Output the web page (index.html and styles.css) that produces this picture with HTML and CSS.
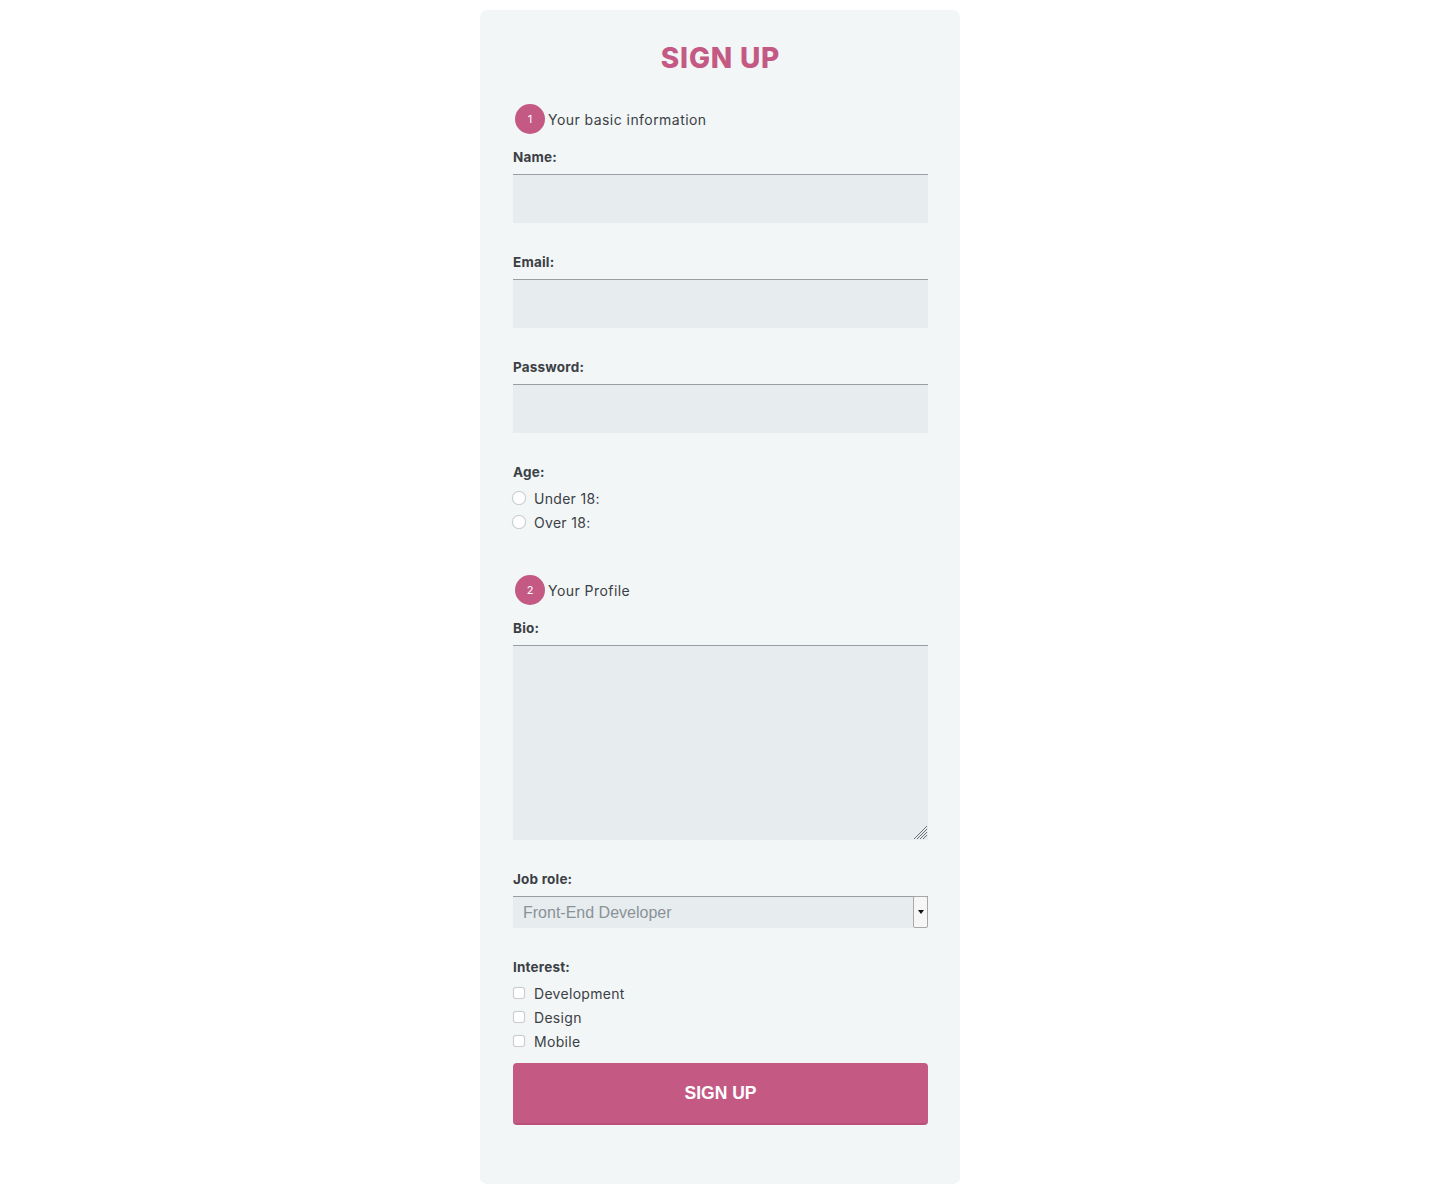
FILE: index.html
```html
<!DOCTYPE html>
<html lang="en">
<head>
<meta charset="utf-8">
<title>Sign Up</title>
<link rel="stylesheet" href="styles.css">
</head>
<body>
<form class="card">
  <h1 class="title">SIGN UP</h1>

  <div class="step"><span class="badge">1</span><span class="step-text">Your basic information</span></div>

  <div class="field">
    <label class="label" for="name">Name:</label>
    <input class="input" id="name" type="text">
  </div>
  <div class="field">
    <label class="label" for="email">Email:</label>
    <input class="input" id="email" type="email">
  </div>
  <div class="field">
    <label class="label" for="password">Password:</label>
    <input class="input" id="password" type="password">
  </div>
  <div class="field field-age">
    <span class="label label-tight">Age:</span>
    <label class="option"><span class="radio"></span>Under 18:</label>
    <label class="option"><span class="radio"></span>Over 18:</label>
  </div>

  <div class="step"><span class="badge">2</span><span class="step-text">Your Profile</span></div>

  <div class="field">
    <label class="label" for="bio">Bio:</label>
    <div class="textarea-wrap">
      <textarea class="textarea" id="bio"></textarea>
      <svg class="grip" width="14" height="14" viewBox="0 0 14 14" aria-hidden="true">
        <g stroke="#6b6f73" stroke-width="1">
          <line x1="1" y1="14" x2="14" y2="1"/>
          <line x1="4" y1="14" x2="14" y2="4"/>
          <line x1="7" y1="14" x2="14" y2="7"/>
          <line x1="10" y1="14" x2="14" y2="10"/>
        </g>
      </svg>
    </div>
  </div>
  <div class="field">
    <label class="label" for="job">Job role:</label>
    <div class="select-wrap">
      <select class="select" id="job">
        <option>Front-End Developer</option>
      </select>
      <span class="select-arrow"><span class="tri"></span></span>
    </div>
  </div>
  <div class="field field-interest">
    <span class="label label-tight">Interest:</span>
    <label class="option"><span class="check"></span>Development</label>
    <label class="option"><span class="check"></span>Design</label>
    <label class="option"><span class="check"></span>Mobile</label>
  </div>

  <button class="submit" type="button">SIGN UP</button>
</form>
</body>
</html>
```

FILE: styles.css
```css
html, body {
  margin: 0;
  padding: 0;
  background: #ffffff;
}

body {
  font-family: Inter, "Open Sans", sans-serif;
  color: #3b4045;
}

.card {
  box-sizing: border-box;
  width: 480px;
  margin: 10px auto 0;
  padding: 0 32px 59px 33px;
  background: #f2f6f7;
  border-radius: 7px;
  display: flex;
  flex-direction: column;
}

.title {
  margin: 31px 0 29px;
  text-align: center;
  font-size: 28px;
  line-height: 34px;
  font-weight: 800;
  color: #c45a84;
  letter-spacing: 0.8px;
}

.step {
  display: flex;
  align-items: center;
  height: 30px;
  margin-bottom: 14px;
}

.badge {
  width: 30px;
  height: 30px;
  margin-left: 2px;
  margin-right: 3px;
  border-radius: 50%;
  background: #c45a84;
  color: #fff;
  font-size: 11px;
  display: flex;
  align-items: center;
  justify-content: center;
}

.step-text {
  font-size: 14px;
  letter-spacing: 0.45px;
  color: #3b4045;
}

.field {
  display: flex;
  flex-direction: column;
  margin-bottom: 30px;
}

.field-age {
  margin-bottom: 41px;
}

.field-interest {
  margin-bottom: 10px;
}

.label {
  font-size: 13.5px;
  line-height: 18px;
  font-weight: 700;
  letter-spacing: 0.2px;
  color: #3b4045;
  margin-bottom: 8px;
}

.label-tight {
  margin-bottom: 5px;
}

.input,
.textarea {
  box-sizing: border-box;
  width: 100%;
  border: none;
  border-top: 1px solid #9a9ea2;
  background: #e7ecee;
  margin: 0;
  padding: 8px;
  font: inherit;
  outline: none;
}

.input {
  height: 49px;
}

.textarea-wrap {
  position: relative;
}

.textarea {
  height: 195px;
  display: block;
  resize: none;
}

.grip {
  position: absolute;
  right: 1px;
  bottom: 1px;
  display: block;
}

.option {
  display: flex;
  align-items: center;
  height: 24px;
  font-size: 14px;
  letter-spacing: 0.3px;
  color: #3b4045;
}

.radio {
  box-sizing: border-box;
  width: 14px;
  height: 14px;
  margin-left: -1px;
  margin-right: 8px;
  border-radius: 50%;
  border: 1.5px solid #c9cdd0;
  background: #fff;
  box-shadow: 0 0 1px rgba(0,0,0,0.15);
}

.check {
  box-sizing: border-box;
  width: 12px;
  height: 12px;
  margin-right: 9px;
  border-radius: 3px;
  border: 1.5px solid #c9cdd0;
  background: #fff;
  box-shadow: 0 0 1px rgba(0,0,0,0.15);
}

.select-wrap {
  display: flex;
  height: 32px;
  border-top: 1px solid #9a9ea2;
  background: #e7ecee;
  box-sizing: border-box;
}

.select {
  flex: 1;
  appearance: none;
  -webkit-appearance: none;
  border: none;
  background: transparent;
  padding: 0 0 0 10px;
  margin: 0;
  font-family: "Liberation Sans", Arial, sans-serif;
  font-size: 16px;
  color: #8a9298;
  outline: none;
}

.select-arrow {
  box-sizing: border-box;
  width: 15px;
  margin-top: -1px;
  background: #f6f6f6;
  border: 1px solid #a8a8a8;
  border-radius: 2px;
  display: flex;
  align-items: center;
  justify-content: center;
}

.tri {
  width: 0;
  height: 0;
  border-left: 3px solid transparent;
  border-right: 3px solid transparent;
  border-top: 4px solid #111;
}

.submit {
  height: 62px;
  width: 100%;
  border: none;
  border-bottom: 2px solid #b9507a;
  border-radius: 4px;
  background: #c45a84;
  color: #fff;
  font-family: "Liberation Sans", Arial, sans-serif;
  font-weight: 700;
  font-size: 17.5px;
  cursor: pointer;
}
```
